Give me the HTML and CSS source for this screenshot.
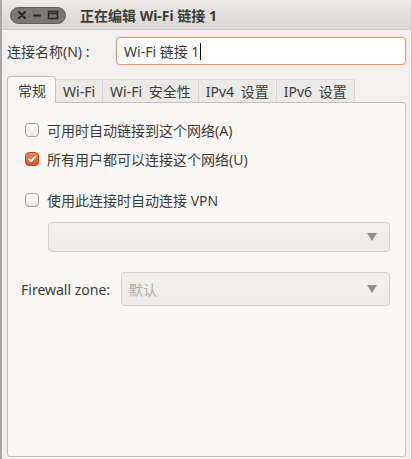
FILE: index.html
```html
<!DOCTYPE html>
<html lang="zh-CN">
<head>
    <meta charset="UTF-8">
    <meta name="viewport" content="width=device-width, initial-scale=1.0">
    <title>正在编辑 Wi-Fi 链接 1</title>
    <link rel="stylesheet" href="styles.css">
</head>
<body>
    <div class="window">
        <div class="titlebar">
            <div class="wm-buttons">
                <svg width="56" height="17" viewBox="0 0 56 17">
                    <rect x="0.5" y="0.5" width="55" height="16" rx="8" fill="#7a7874" stroke="#5e5c58"/>
                    <path d="M9 5 L15 11 M15 5 L9 11" stroke="#2e2d2a" stroke-width="2.2" stroke-linecap="round"/>
                    <path d="M23 8.5 H31" stroke="#2e2d2a" stroke-width="2.2"/>
                    <rect x="38.5" y="4.5" width="9" height="7" fill="none" stroke="#2e2d2a" stroke-width="1.6"/>
                    <path d="M38.5 6.5 H47.5" stroke="#2e2d2a" stroke-width="1.6"/>
                </svg>
            </div>
            <div class="title">正在编辑 Wi-Fi 链接 1</div>
        </div>

        <div class="content">
            <div class="name-row">
                <label for="conn-name">连接名称(N) :</label>
                <div class="name-input" id="conn-name">Wi-Fi 链接 1<span class="caret"></span></div>
            </div>

            <div class="tabs">
                <div class="tab active">常规</div>
                <div class="tab">Wi-Fi</div>
                <div class="tab">Wi-Fi 安全性</div>
                <div class="tab">IPv4 设置</div>
                <div class="tab">IPv6 设置</div>
            </div>

            <div class="panel">
                <div class="check-row first">
                    <span class="checkbox"></span>
                    <span>可用时自动链接到这个网络(A)</span>
                </div>
                <div class="check-row">
                    <span class="checkbox checked">
                        <svg width="14" height="14" viewBox="0 0 14 14">
                            <path d="M3.5 7.2 L6 9.8 L10.8 4.2" fill="none" stroke="#fff" stroke-width="2" stroke-linecap="round" stroke-linejoin="round"/>
                        </svg>
                    </span>
                    <span>所有用户都可以连接这个网络(U)</span>
                </div>
                <div class="check-row vpn">
                    <span class="checkbox"></span>
                    <span>使用此连接时自动连接 VPN</span>
                </div>
                <div class="combo vpn-combo">
                    <span class="combo-text"></span>
                    <span class="arrow"></span>
                </div>
                <div class="zone-row">
                    <span class="zone-label">Firewall zone:</span>
                    <div class="combo zone-combo">
                        <span class="combo-text">默认</span>
                        <span class="arrow"></span>
                    </div>
                </div>
            </div>
        </div>
    </div>
</body>
</html>
```

FILE: styles.css
```css
html, body {
    margin: 0;
    padding: 0;
}

body {
    font-family: "Noto Sans", "Noto Sans CJK SC", sans-serif;
    font-size: 14px;
    color: #3c3b37;
    background-color: #f2f1ef;
}

.window {
    width: 412px;
    height: 459px;
    box-sizing: border-box;
    border-left: 2px solid #a9a7a3;
    border-right: 1px solid #c9c7c3;
    background-color: #f2f1ef;
    display: flex;
    flex-direction: column;
}

.titlebar {
    height: 30px;
    flex: none;
    display: flex;
    align-items: center;
    background: linear-gradient(#ebeae7, #d7d6d2);
    border-bottom: 1px solid #cfcdc9;
    border-top-right-radius: 6px;
    box-sizing: border-box;
}

.wm-buttons {
    display: flex;
    margin-left: 8px;
    margin-top: 1px;
}

.title {
    margin-left: 14px;
    font-weight: bold;
    font-size: 14px;
    color: #3c3b37;
}

.content {
    flex: 1;
    display: flex;
    flex-direction: column;
    padding: 6px 5px 2px 5px;
}

.name-row {
    display: flex;
    align-items: center;
    height: 30px;
}

.name-row label {
    width: 109px;
    font-size: 14px;
}

.name-input {
    flex: 1;
    height: 28px;
    box-sizing: border-box;
    border: 1px solid #e49a7e;
    border-radius: 4px;
    background-color: #fff;
    box-shadow: 0 0 0 1px #f6dfd5;
    padding: 0 0 0 7px;
    display: flex;
    align-items: center;
    font-size: 14px;
    color: #3c3b37;
}

.caret {
    display: inline-block;
    width: 1px;
    height: 17px;
    background-color: #000;
    margin-left: 1px;
}

.tabs {
    display: flex;
    align-items: flex-end;
    margin-top: 9px;
    height: 27px;
}

.tab {
    height: 22px;
    padding: 0 7px;
    display: flex;
    align-items: center;
    background-color: #ebeae7;
    border-right: 1px solid #d9d7d3;
    border-top: 1px solid #e2e0dc;
    font-size: 14px;
    word-spacing: 3px;
    color: #3c3b37;
}

.tab.active {
    height: 26px;
    padding: 0 9px 0 10px;
    background-color: #f9f8f6;
    border: 1px solid #c3c1bd;
    border-bottom: none;
    border-radius: 4px 4px 0 0;
    margin-bottom: -1px;
    position: relative;
}

.panel {
    flex: 1;
    background-color: #f9f8f6;
    border: 1px solid #c3c1bd;
    border-radius: 0 3px 3px 3px;
    padding: 0 15px 0 17px;
    display: flex;
    flex-direction: column;
}

.check-row {
    display: flex;
    align-items: center;
    height: 22px;
    margin-top: 7px;
    font-size: 14px;
}

.check-row.first {
    margin-top: 16px;
}

.check-row.vpn {
    margin-top: 19px;
}

.checkbox {
    width: 14px;
    height: 14px;
    box-sizing: border-box;
    border: 1px solid #a19f9b;
    border-radius: 4px;
    background: linear-gradient(#ffffff, #ebeae7);
    margin-right: 8px;
    display: flex;
    align-items: center;
    justify-content: center;
    flex: none;
}

.checkbox.checked {
    border-color: #b7461c;
    background: linear-gradient(#f08a5d, #d5501f);
}

.combo {
    display: flex;
    align-items: center;
    justify-content: space-between;
    box-sizing: border-box;
    border: 1px solid #d3d1cd;
    border-radius: 4px;
    background: linear-gradient(#f2f1ef, #edecea);
    padding: 0 12px 0 7px;
}

.vpn-combo {
    margin-left: 23px;
    height: 30px;
    margin-top: 11px;
}

.combo-text {
    color: #aeaca8;
    font-size: 14px;
}

.arrow {
    width: 0;
    height: 0;
    border-left: 5px solid transparent;
    border-right: 5px solid transparent;
    border-top: 8px solid #918f8b;
}

.zone-row {
    display: flex;
    align-items: center;
    margin-top: 20px;
}

.zone-label {
    width: 100px;
    margin-left: -4px;
    font-size: 14px;
}

.zone-combo {
    flex: 1;
    height: 34px;
}
```
